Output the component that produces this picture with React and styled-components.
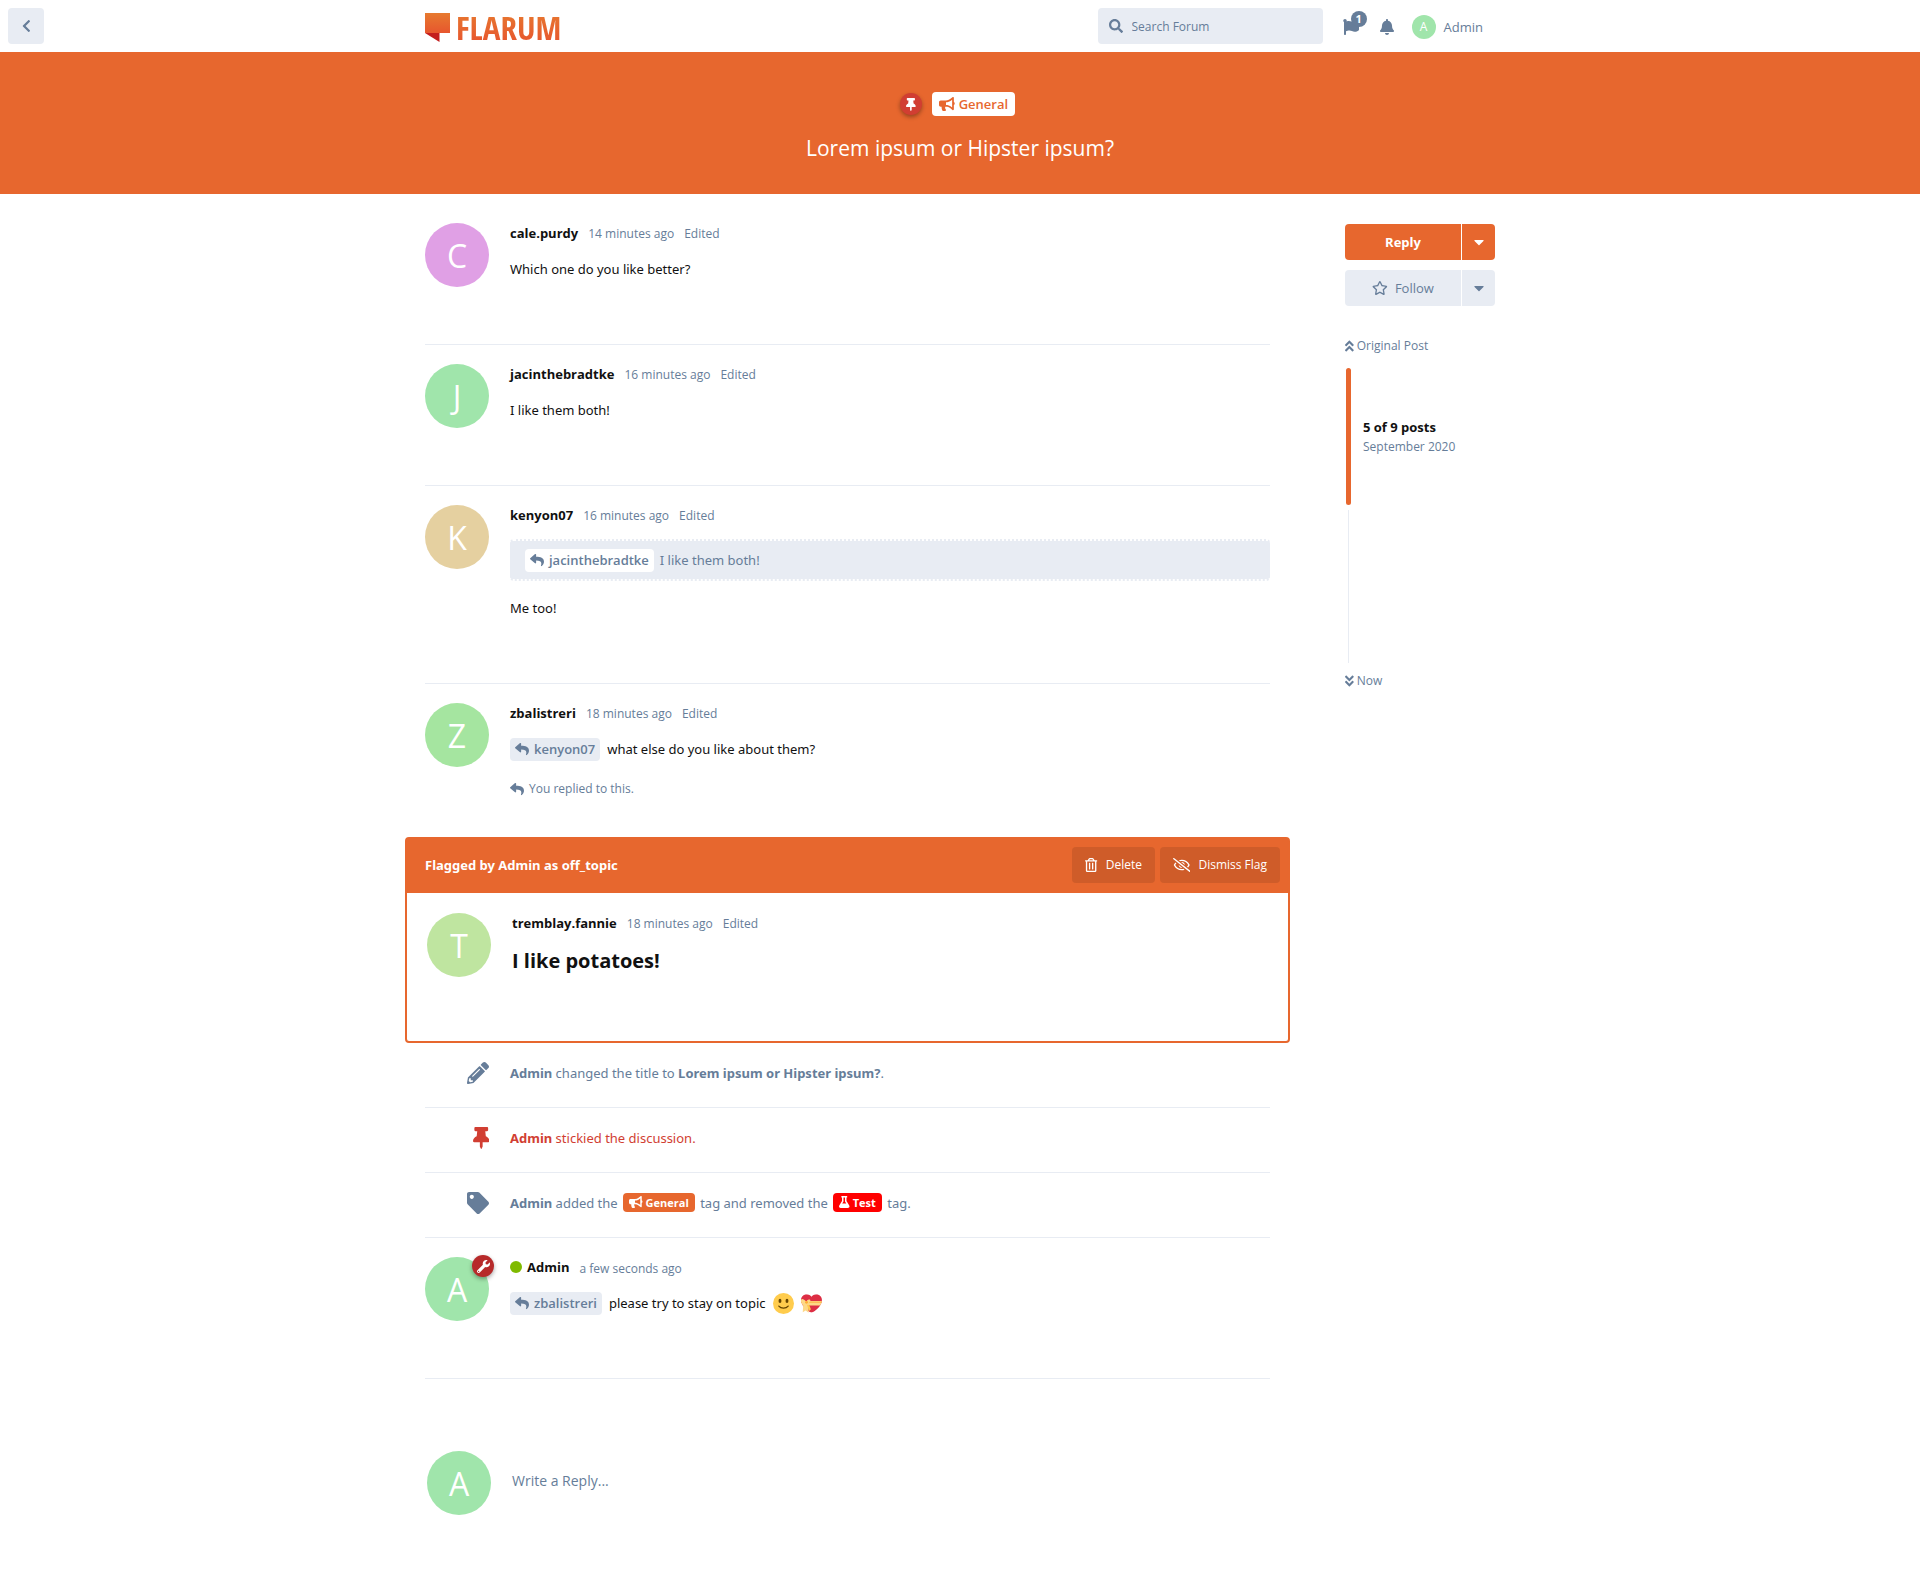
import React from "react";
import styled, { createGlobalStyle, css } from "styled-components";
import { IconContext } from "react-icons";
import {
  FaAngleDoubleDown,
  FaAngleDoubleUp,
  FaBell,
  FaBullhorn,
  FaCaretDown,
  FaChevronLeft,
  FaFlag,
  FaFlask,
  FaPencilAlt,
  FaRegEyeSlash,
  FaRegStar,
  FaRegTrashAlt,
  FaReply,
  FaSearch,
  FaTag,
  FaThumbtack,
  FaWrench,
} from "react-icons/fa";

const color = {
  primary: "#e7672e",
  muted: "#667d99",
  control: "#e8ecf3",
  text: "#111",
  red: "#d13e32",
  admin: "#b72a2a",
};

const bodyFont = `"Noto Sans", "Open Sans", sans-serif`;

const GlobalStyle = createGlobalStyle`
  *, *::before, *::after { box-sizing: border-box; }
  body {
    margin: 0;
    background: #fff;
    color: ${color.text};
    font-family: "Open Sans", "Noto Sans", sans-serif;
    font-size: 13px;
    line-height: 20px;
  }
  button, input { font: inherit; }
  button { border: 0; cursor: pointer; }
  a { color: inherit; text-decoration: none; }
  h1, h2, p, ul, blockquote { margin: 0; padding: 0; }
  svg { display: block; flex: none; }
  svg[stroke="currentColor"] { width: auto; height: 1em; }
`;

/* Header */

const Header = styled.header`
  display: grid;
  grid-template-columns: minmax(52px, 1fr) minmax(0, 1070px) minmax(0, 1fr);
  align-items: center;
  height: 52px;
`;

const BackButton = styled.button`
  display: grid;
  place-items: center;
  width: 36px;
  height: 36px;
  margin-left: 8px;
  padding: 0;
  border-radius: 4px;
  background: ${color.control};
  color: ${color.muted};
  font-size: 14px;
`;

const HeaderContent = styled.div`
  display: flex;
  align-items: center;
  justify-content: space-between;
`;

const Logo = styled.a`
  display: flex;
  align-items: center;
  gap: 5px;
  height: 36px;
  padding-top: 4px;
`;

const LogoText = styled.span`
  font: bold 33px/36px "Open Sans Condensed", "Noto Sans ExtraCondensed", "Roboto Condensed", Roboto, sans-serif;
  background: linear-gradient(#e77a2f, #e7522e);
  background-clip: text;
  color: transparent;
`;

const HeaderControls = styled.nav`
  display: flex;
  align-items: center;
  color: ${color.muted};
`;

const Search = styled.label`
  display: flex;
  align-items: center;
  gap: 9px;
  width: 225px;
  height: 36px;
  margin-right: 20px;
  padding: 0 11px;
  border-radius: 4px;
  background: ${color.control};
  font-size: 14px;
`;

const SearchInput = styled.input`
  flex: 1;
  min-width: 0;
  padding: 2px 0 0;
  border: 0;
  outline: 0;
  background: transparent;
  font-size: 12px;
  &::placeholder { color: ${color.muted}; opacity: 1; }
`;

const IconButton = styled.button`
  position: relative;
  display: grid;
  place-items: center;
  width: 37px;
  height: 36px;
  padding: 2px 0 0;
  background: transparent;
  color: ${color.muted};
  font-size: 16px;
  &:first-of-type { width: 16px; margin-right: 10px; }
`;

const Count = styled.span`
  position: absolute;
  top: 3px;
  left: 8px;
  width: 16px;
  height: 16px;
  border-radius: 50%;
  background: ${color.muted};
  color: #fff;
  font-size: 11px;
  font-weight: 700;
  line-height: 16px;
  text-align: center;
`;

const UserButton = styled.button`
  display: flex;
  align-items: center;
  gap: 8px;
  height: 36px;
  margin: 0 12px 0 6px;
  padding: 2px 0 0;
  background: transparent;
  color: ${color.muted};
`;

const Avatar = styled.span`
  position: relative;
  flex: none;
  width: ${(p) => p.$size || 64}px;
  height: ${(p) => p.$size || 64}px;
  border-radius: 50%;
  background: ${(p) => p.$bg};
  color: #fff;
  font-size: ${(p) => (p.$size ? 12 : 32)}px;
  line-height: ${(p) => p.$size || 65}px;
  text-align: center;
`;

/* Hero */

const Hero = styled.section`
  display: flex;
  flex-direction: column;
  align-items: center;
  gap: 18px;
  height: 142px;
  padding-top: 40px;
  background: ${color.primary};
  color: #fff;
`;

const HeroBadges = styled.div`
  display: flex;
  align-items: center;
  gap: 10px;
  padding-right: 5px;
`;

const Badge = styled.span`
  display: grid;
  place-items: center;
  width: 22px;
  height: 22px;
  border-radius: 50%;
  background: ${(p) => p.$bg};
  color: #fff;
  font-size: 13px;
  box-shadow: 0 2px 4px rgba(0, 0, 0, 0.35);
`;

const AvatarBadge = styled(Badge)`
  position: absolute;
  top: -2px;
  right: -5px;
`;

const HeroTag = styled.a`
  display: flex;
  align-items: center;
  gap: 4px;
  height: 24px;
  padding: 0 7px;
  border-radius: 4px;
  background: #fff;
  color: ${color.primary};
  font-weight: 600;
  font-size: 13px;
  svg { font-size: 14px; }
`;

const HeroTitle = styled.h1`
  font-size: 21px;
  font-weight: 400;
  line-height: 28px;
`;

/* Page */

const Page = styled.div`
  display: flex;
  align-items: flex-start;
  gap: 75px;
  max-width: 1070px;
  margin: 10px auto 0;
`;

const Stream = styled.main`
  flex: 1;
  min-width: 0;
`;

const postLayout = css`
  display: flex;
  gap: 21px;
`;

const Post = styled.article`
  ${postLayout}
  padding: 19px 0 25px;
  border-bottom: 1px solid ${(p) => (p.$plain ? "transparent" : color.control)};
`;

const PostMain = styled.div`
  flex: 1;
  min-width: 0;
`;

const PostHeader = styled.header`
  display: flex;
  align-items: baseline;
  gap: 10px;
  height: 20px;
  color: ${color.muted};
  font-size: 12px;
`;

const Author = styled.a`
  display: flex;
  align-items: center;
  gap: 5px;
  color: ${color.text};
  font-size: 13px;
  font-weight: 700;
`;

const OnlineDot = styled.span`
  width: 12px;
  height: 12px;
  border-radius: 50%;
  background: #7fba00;
`;

const PostBody = styled.div`
  display: grid;
  gap: 15px;
  margin: 14px 0 18px;
  font-family: ${bodyFont};
  line-height: 24px;
`;

const Line = styled.p`
  display: flex;
  align-items: center;
  gap: 7px;
`;

const BodyTitle = styled.h2`
  font-family: "Open Sans", sans-serif;
  font-size: 20px;
  line-height: 28px;
`;

const Mention = styled.a`
  display: flex;
  align-items: center;
  gap: 5px;
  height: 23px;
  padding: 0 5px;
  border-radius: 4px;
  background: ${(p) => (p.$light ? "#fff" : color.control)};
  color: ${color.muted};
  font-family: "Open Sans", sans-serif;
  font-weight: 600;
  line-height: 23px;
  svg { font-size: 14px; }
`;

const Quote = styled.blockquote`
  display: flex;
  align-items: center;
  gap: 6px;
  height: 42px;
  padding: 0 15px;
  border: 2px dotted #fff;
  border-width: 2px 0;
  border-radius: 4px;
  background: ${color.control};
  color: ${color.muted};
`;

const PostFooter = styled.footer`
  display: flex;
  align-items: center;
  gap: 5px;
  min-height: 20px;
  color: ${color.muted};
  font-size: 12px;
  svg { font-size: 14px; }
`;

const FlagCard = styled.section`
  margin: 12px -20px 0;
  border: 2px solid ${color.primary};
  border-radius: 4px;
`;

const FlagBar = styled.div`
  display: flex;
  align-items: center;
  gap: 5px;
  height: 54px;
  padding: 0 8px 2px 18px;
  background: ${color.primary};
  color: #fff;
`;

const FlagText = styled.strong`
  flex: 1;
  font-family: ${bodyFont};
`;

const FlagButton = styled.button`
  display: flex;
  align-items: center;
  gap: 8px;
  height: 36px;
  padding: 0 13px;
  border-radius: 4px;
  background: rgba(0, 0, 0, 0.1);
  color: #fff;
  font-size: 12px;
  svg { font-size: 14px; }
`;

const FlaggedPost = styled.article`
  ${postLayout}
  min-height: 148px;
  padding: 20px;
`;

const Event = styled.article`
  display: flex;
  align-items: center;
  gap: 21px;
  height: 65px;
  padding-bottom: 4px;
  border-bottom: 1px solid ${color.control};
  color: ${(p) => p.$color || color.muted};
  font-family: ${bodyFont};
  line-height: 24px;
`;

const EventIcon = styled.span`
  display: flex;
  justify-content: flex-end;
  width: 64px;
  font-size: 22px;
`;

const EventText = styled.p`
  flex: 1;
`;

const Tag = styled.a`
  display: inline-flex;
  align-items: center;
  gap: 3px;
  height: 19px;
  margin: 0 2px;
  padding: 0 6px;
  border-radius: 4px;
  background: ${(p) => p.$bg};
  color: #fff;
  font-family: "Open Sans", sans-serif;
  font-size: 11px;
  font-weight: 700;
  line-height: 19px;
  svg { font-size: 12px; }
`;

const ReplyPlaceholder = styled.button`
  ${postLayout}
  width: 100%;
  margin: 52px 0 60px;
  padding: 20px 2px;
  background: transparent;
  color: ${color.muted};
  font-size: 14px;
  text-align: left;
`;

const ReplyText = styled.span`
  padding-top: 20px;
`;

/* Sidebar */

const Sidebar = styled.aside`
  flex: none;
  width: 150px;
  padding-top: 20px;
`;

const SplitButton = styled.div`
  display: flex;
  gap: 1px;
  margin-bottom: 10px;
`;

const SideButton = styled.button`
  display: flex;
  flex: ${(p) => (p.$toggle ? "none" : 1)};
  align-items: center;
  justify-content: center;
  gap: 7px;
  width: ${(p) => (p.$toggle ? "33px" : "auto")};
  height: 36px;
  padding: 0;
  border-radius: ${(p) => (p.$toggle ? "0 4px 4px 0" : "4px 0 0 4px")};
  background: ${(p) => (p.$primary ? color.primary : color.control)};
  color: ${(p) => (p.$primary ? "#fff" : color.muted)};
  font-weight: ${(p) => (p.$primary ? 700 : 400)};
  svg { font-size: ${(p) => (p.$toggle ? 16 : 14)}px; }
`;

const Scrubber = styled.div`
  display: grid;
  gap: 8px;
  margin-top: 30px;
  color: ${color.muted};
  font-size: 12px;
`;

const ScrubberLink = styled.a`
  display: flex;
  align-items: center;
  gap: 3px;
  svg { font-size: 14px; }
`;

const Track = styled.div`
  display: grid;
  gap: 5px;
  height: 299px;
  grid-template-rows: 137px 1fr;
  padding-top: 4px;
  padding-left: 1px;
`;

const Handle = styled.div`
  display: flex;
  align-items: center;
  gap: 12px;
  line-height: 19px;
  &::before {
    content: "";
    width: 5px;
    height: 100%;
    border-radius: 4px;
    background: ${color.primary};
  }
`;

const HandleInfo = styled.div`
  display: grid;
  strong { color: ${color.text}; font-size: 13px; }
`;

const TrackRest = styled.div`
  width: 1px;
  margin-left: 2px;
  background: ${color.control};
`;

const LogoMark = () => (
  <svg width="26" height="30" viewBox="0 0 26 30" aria-hidden="true">
    <defs>
      <linearGradient id="mark" x1="0" y1="0" x2="0" y2="1">
        <stop offset="0" stopColor="#e77a2f" />
        <stop offset="1" stopColor="#e7562e" />
      </linearGradient>
    </defs>
    <path d="M0 0H25V20H0Z" fill="url(#mark)" />
    <path d="M0 20H14.500V29Z" fill="#c41e1e" />
  </svg>
);

const Smiley = () => (
  <svg width="21" height="21" viewBox="0 0 36 36" role="img" aria-label="smile">
    <circle cx="18" cy="18" r="18" fill="#ffcc4d" />
    <ellipse cx="12" cy="13.500" rx="2.500" ry="3.500" fill="#664500" />
    <ellipse cx="24" cy="13.500" rx="2.500" ry="3.500" fill="#664500" />
    <path
      d="M10 22.500C12 25 14.800 26 18 26S24 25 26 22.500"
      fill="none"
      stroke="#664500"
      strokeWidth="2.200"
      strokeLinecap="round"
    />
  </svg>
);

const GiftHeart = () => (
  <svg width="21" height="21" viewBox="0 0 36 36" role="img" aria-label="gift heart">
    <defs>
      <clipPath id="heart">
        <path d="M35.900 11.800C35.900 6.400 31.500 2 26.100 2 22.700 2 19.700 3.700 18 6.300 16.200 3.700 13.200 2 9.900 2 4.400 2 .1 6.400.1 11.800.1 21.900 11.200 31 18 33.500 24.800 31 35.900 21.900 35.900 11.800Z" />
      </clipPath>
    </defs>
    <g clipPath="url(#heart)">
      <path d="M0 0H36V36H0Z" fill="#dd2e44" />
      <path d="M0 13.500H36V21.500H0Z" fill="#fdd888" />
      <path d="M0 14.500H36V17H0Z" fill="#ffac33" opacity=".6" />
    </g>
    <path d="M4 17 3 33 8 30 13 34 13 17Z" fill="#fdd888" />
    <path d="M9 17 14 31 17 28 12 16Z" fill="#ffcc4d" />
    <path
      d="M9 15C5 10 1 9 0 12S2 19 8 17.500C5 21 6 22 9 19 12 22 15 21 13 17 17 15 17 11 14 11S10 13 9 15Z"
      fill="#fdd888"
    />
    <circle cx="9.500" cy="16" r="2.500" fill="#ffac33" />
  </svg>
);

const MentionLink = ({ name, light }) => (
  <Mention href="#" $light={light}>
    <FaReply />
    {name}
  </Mention>
);

const Meta = ({ author, time, edited = true, online }) => (
  <PostHeader>
    <Author href="#">
      {online && <OnlineDot />}
      <span>{author}</span>
    </Author>
    <a href="#">{time}</a>
    {edited && <span>Edited</span>}
  </PostHeader>
);

const CommentPost = ({ letter, bg, badge, plain, footer, children, ...meta }) => (
  <Post $plain={plain}>
    <Avatar $bg={bg}>
      {letter}
      {badge}
    </Avatar>
    <PostMain>
      <Meta {...meta} />
      <PostBody>{children}</PostBody>
      <PostFooter>{footer}</PostFooter>
    </PostMain>
  </Post>
);

// Icons take their width from their own viewBox, so wide and narrow glyphs keep their proportions.
const iconDefaults = { size: "100%" };

export default function App() {
  return (
    <IconContext.Provider value={iconDefaults}>
      <GlobalStyle />
      <Header>
        <BackButton aria-label="Back">
          <FaChevronLeft />
        </BackButton>
        <HeaderContent>
          <Logo href="#">
            <LogoMark />
            <LogoText>FLARUM</LogoText>
          </Logo>
          <HeaderControls>
            <Search>
              <FaSearch />
              <SearchInput type="search" placeholder="Search Forum" aria-label="Search Forum" />
            </Search>
            <IconButton aria-label="Flagged posts">
              <FaFlag />
              <Count>1</Count>
            </IconButton>
            <IconButton aria-label="Notifications">
              <FaBell />
            </IconButton>
            <UserButton>
              <Avatar $bg="#a0e5ab" $size={24}>A</Avatar>
              Admin
            </UserButton>
          </HeaderControls>
        </HeaderContent>
      </Header>

      <Hero>
        <HeroBadges>
          <Badge $bg={color.red}>
            <FaThumbtack />
          </Badge>
          <HeroTag href="#">
            <FaBullhorn />
            General
          </HeroTag>
        </HeroBadges>
        <HeroTitle>Lorem ipsum or Hipster ipsum?</HeroTitle>
      </Hero>

      <Page>
        <Stream>
          <CommentPost letter="C" bg="#e0a0e5" author="cale.purdy" time="14 minutes ago">
            <p>Which one do you like better?</p>
          </CommentPost>
          <CommentPost letter="J" bg="#a0e5ab" author="jacinthebradtke" time="16 minutes ago">
            <p>I like them both!</p>
          </CommentPost>
          <CommentPost letter="K" bg="#e5d0a0" author="kenyon07" time="16 minutes ago">
            <Quote>
              <MentionLink name="jacinthebradtke" light />
              I like them both!
            </Quote>
            <p>Me too!</p>
          </CommentPost>
          <CommentPost
            letter="Z"
            bg="#a5e5a0"
            author="zbalistreri"
            time="18 minutes ago"
            plain
            footer={
              <>
                <FaReply />
                <span>You replied to this.</span>
              </>
            }
          >
            <Line>
              <MentionLink name="kenyon07" />
              what else do you like about them?
            </Line>
          </CommentPost>

          <FlagCard>
            <FlagBar>
              <FlagText>Flagged by Admin as off_topic</FlagText>
              <FlagButton>
                <FaRegTrashAlt />
                Delete
              </FlagButton>
              <FlagButton>
                <FaRegEyeSlash />
                Dismiss Flag
              </FlagButton>
            </FlagBar>
            <FlaggedPost>
              <Avatar $bg="#bfe5a0">T</Avatar>
              <PostMain>
                <Meta author="tremblay.fannie" time="18 minutes ago" />
                <PostBody>
                  <BodyTitle>I like potatoes!</BodyTitle>
                </PostBody>
              </PostMain>
            </FlaggedPost>
          </FlagCard>

          <Event>
            <EventIcon>
              <FaPencilAlt />
            </EventIcon>
            <EventText>
              <strong>Admin</strong> changed the title to <strong>Lorem ipsum or Hipster ipsum?</strong>.
            </EventText>
          </Event>
          <Event $color={color.red}>
            <EventIcon>
              <FaThumbtack />
            </EventIcon>
            <EventText>
              <strong>Admin</strong> stickied the discussion.
            </EventText>
          </Event>
          <Event>
            <EventIcon>
              <FaTag />
            </EventIcon>
            <EventText>
              <strong>Admin</strong> added the{" "}
              <Tag href="#" $bg={color.primary}>
                <FaBullhorn />
                General
              </Tag>{" "}
              tag and removed the{" "}
              <Tag href="#" $bg="#f00">
                <FaFlask />
                Test
              </Tag>{" "}
              tag.
            </EventText>
          </Event>

          <CommentPost
            letter="A"
            bg="#a0e5ab"
            author="Admin"
            time="a few seconds ago"
            edited={false}
            online
            badge={
              <AvatarBadge $bg={color.admin}>
                <FaWrench />
              </AvatarBadge>
            }
          >
            <Line>
              <MentionLink name="zbalistreri" />
              please try to stay on topic
              <Smiley />
              <GiftHeart />
            </Line>
          </CommentPost>

          <ReplyPlaceholder>
            <Avatar $bg="#a0e5ab">A</Avatar>
            <ReplyText>Write a Reply...</ReplyText>
          </ReplyPlaceholder>
        </Stream>

        <Sidebar>
          <SplitButton>
            <SideButton $primary>Reply</SideButton>
            <SideButton $primary $toggle aria-label="Discussion actions">
              <FaCaretDown />
            </SideButton>
          </SplitButton>
          <SplitButton>
            <SideButton>
              <FaRegStar />
              Follow
            </SideButton>
            <SideButton $toggle aria-label="Follow options">
              <FaCaretDown />
            </SideButton>
          </SplitButton>
          <Scrubber>
            <ScrubberLink href="#">
              <FaAngleDoubleUp />
              Original Post
            </ScrubberLink>
            <Track>
              <Handle>
                <HandleInfo>
                  <strong>5 of 9 posts</strong>
                  <span>September 2020</span>
                </HandleInfo>
              </Handle>
              <TrackRest />
            </Track>
            <ScrubberLink href="#">
              <FaAngleDoubleDown />
              Now
            </ScrubberLink>
          </Scrubber>
        </Sidebar>
      </Page>
    </IconContext.Provider>
  );
}
